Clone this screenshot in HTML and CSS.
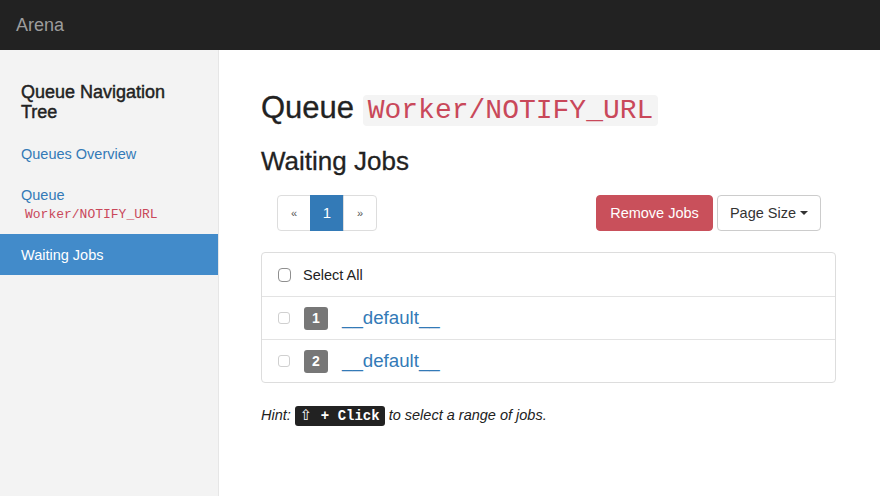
FILE: index.html
```html
<!DOCTYPE html>
<html>
<head>
<meta charset="utf-8">
<title>Arena</title>
<link rel="stylesheet" href="styles.css">
</head>
<body>
<header class="navbar"><span class="brand">Arena</span></header>
<div class="layout">
  <aside class="sidebar">
    <h3 class="side-title">Queue Navigation Tree</h3>
    <nav class="side-nav">
      <a class="side-link">Queues Overview</a>
      <a class="side-link">Queue<code class="side-code">Worker/NOTIFY_URL</code></a>
      <a class="side-link active">Waiting Jobs</a>
    </nav>
  </aside>
  <main class="main">
    <h1 class="title">Queue <code class="title-code">Worker/NOTIFY_URL</code></h1>
    <h2 class="subtitle">Waiting Jobs</h2>
    <div class="toolbar">
      <ul class="pagination">
        <li class="page">&laquo;</li>
        <li class="page current">1</li>
        <li class="page">&raquo;</li>
      </ul>
      <div class="actions">
        <button class="btn btn-danger">Remove Jobs</button>
        <button class="btn btn-default">Page Size <span class="caret"></span></button>
      </div>
    </div>
    <div class="panel">
      <div class="row row-head">
        <input type="checkbox" class="check check-all">
        <span class="select-label">Select All</span>
      </div>
      <div class="row">
        <input type="checkbox" class="check">
        <span class="badge">1</span>
        <a class="job-link">__default__</a>
      </div>
      <div class="row">
        <input type="checkbox" class="check">
        <span class="badge">2</span>
        <a class="job-link">__default__</a>
      </div>
    </div>
    <p class="hint"><em>Hint:</em> <kbd class="kbd"><span class="shift">⇧</span> + Click</kbd> <em>to select a range of jobs.</em></p>
  </main>
</div>
</body>
</html>
```

FILE: styles.css
```css
* { box-sizing: border-box; }
html, body { margin: 0; padding: 0; }
body {
  font-family: "Liberation Sans", Arial, sans-serif;
  font-size: 14.5px;
  line-height: 20px;
  color: #333;
  background: #fff;
  width: 880px;
  height: 496px;
  overflow: hidden;
}
.navbar {
  height: 50px;
  background: #222;
  display: flex;
  align-items: center;
  padding-left: 16px;
}
.brand {
  color: #9d9d9d;
  font-size: 18px;
  line-height: 20px;
}
.layout {
  display: flex;
  height: 446px;
}
.sidebar {
  width: 219px;
  flex: none;
  background: #f3f3f3;
  border-right: 1px solid #e6e6e6;
  padding-top: 32px;
}
.side-title {
  margin: 0 0 11px;
  padding: 0 21px;
  font-size: 18px;
  line-height: 20px;
  font-weight: 500;
  color: #222;
  -webkit-text-stroke: 0.45px #222;
}
.side-nav { display: flex; flex-direction: column; }
.side-link {
  display: block;
  padding: 10.5px 21px;
  color: #337ab7;
  font-size: 14.5px;
  line-height: 20px;
}
.side-link.active {
  background: #428bca;
  color: #fff;
}
.side-code {
  display: block;
  font-family: "Liberation Mono", "DejaVu Sans Mono", monospace;
  font-size: 13px;
  line-height: 19px;
  color: #c9485a;
  padding-left: 4px;
}
.main {
  flex: 1;
  padding: 41px 44px 0 42px;
}
.title {
  margin: 0;
  font-size: 31px;
  line-height: 34px;
  font-weight: 500;
  color: #222;
  -webkit-text-stroke: 0.3px #222;
}
.title-code {
  font-family: "Liberation Mono", "DejaVu Sans Mono", monospace;
  font-size: 28px;
  color: #c9485a;
  -webkit-text-stroke: 0;
  background: #f4f4f4;
  padding: 0 5px;
  border-radius: 4px;
}
.subtitle {
  margin: 19px 0 0;
  font-size: 26px;
  line-height: 29px;
  font-weight: 500;
  color: #222;
  -webkit-text-stroke: 0.3px #222;
}
.toolbar {
  margin-top: 19px;
  display: flex;
  justify-content: space-between;
  align-items: center;
  padding: 0 15px 0 16px;
}
.pagination {
  list-style: none;
  margin: 0;
  padding: 0;
  display: flex;
}
.page {
  width: 34px;
  height: 36px;
  display: flex;
  align-items: center;
  justify-content: center;
  border: 1px solid #ddd;
  margin-left: -1px;
  color: #555;
  font-size: 11px;
}
.page:first-child { border-radius: 4px 0 0 4px; margin-left: 0; }
.page:last-child { border-radius: 0 4px 4px 0; }
.page.current {
  background: #337ab7;
  border-color: #337ab7;
  color: #fff;
  font-size: 15px;
}
.actions { display: flex; gap: 4px; }
.btn {
  height: 36px;
  font-family: inherit;
  font-size: 14.5px;
  border-radius: 4px;
  padding: 0;
  border: 1px solid transparent;
  display: flex;
  align-items: center;
  justify-content: center;
  white-space: nowrap;
}
.btn-danger {
  background: #c9505b;
  border-color: #c9505b;
  color: #fff;
  width: 117px;
}
.btn-default {
  background: #fff;
  border-color: #ccc;
  color: #333;
  width: 104px;
}
.caret {
  display: inline-block;
  width: 0;
  height: 0;
  margin-left: 4px;
  border-top: 4px solid #333;
  border-left: 4px solid transparent;
  border-right: 4px solid transparent;
}
.panel {
  margin-top: 21px;
  border: 1px solid #ddd;
  border-radius: 4px;
}
.row {
  height: 43px;
  display: flex;
  align-items: center;
  padding-left: 16px;
  border-top: 1px solid #e3e3e3;
}
.row-head { border-top: none; height: 43px; }
.check {
  appearance: none;
  -webkit-appearance: none;
  margin: 0;
  width: 12px;
  height: 12px;
  border: 1px solid #d0d0d0;
  border-radius: 3px;
  background: #fff;
  flex: none;
}
.check-all {
  width: 13px;
  height: 14px;
  border-color: #8f8f8f;
  border-radius: 4px;
}
.select-label { margin-left: 12px; color: #222; }
.badge {
  margin-left: 14px;
  width: 24px;
  height: 23px;
  border-radius: 3px;
  background: #777;
  color: #fff;
  font-weight: bold;
  font-size: 14px;
  display: flex;
  align-items: center;
  justify-content: center;
}
.job-link {
  margin-left: 14px;
  color: #337ab7;
  font-size: 18.7px;
  text-decoration: none;
}
.hint {
  margin: 22px 0 0;
  line-height: 20px;
  color: #222;
}
.kbd {
  font-family: "Liberation Mono", "DejaVu Sans Mono", monospace;
  font-size: 14px;
  font-weight: bold;
  background: #222;
  color: #fff;
  padding: 2px 5px;
  border-radius: 3px;
}
.shift {
  font-family: "DejaVu Sans", sans-serif;
  font-weight: normal;
  font-size: 15px;
}
```
